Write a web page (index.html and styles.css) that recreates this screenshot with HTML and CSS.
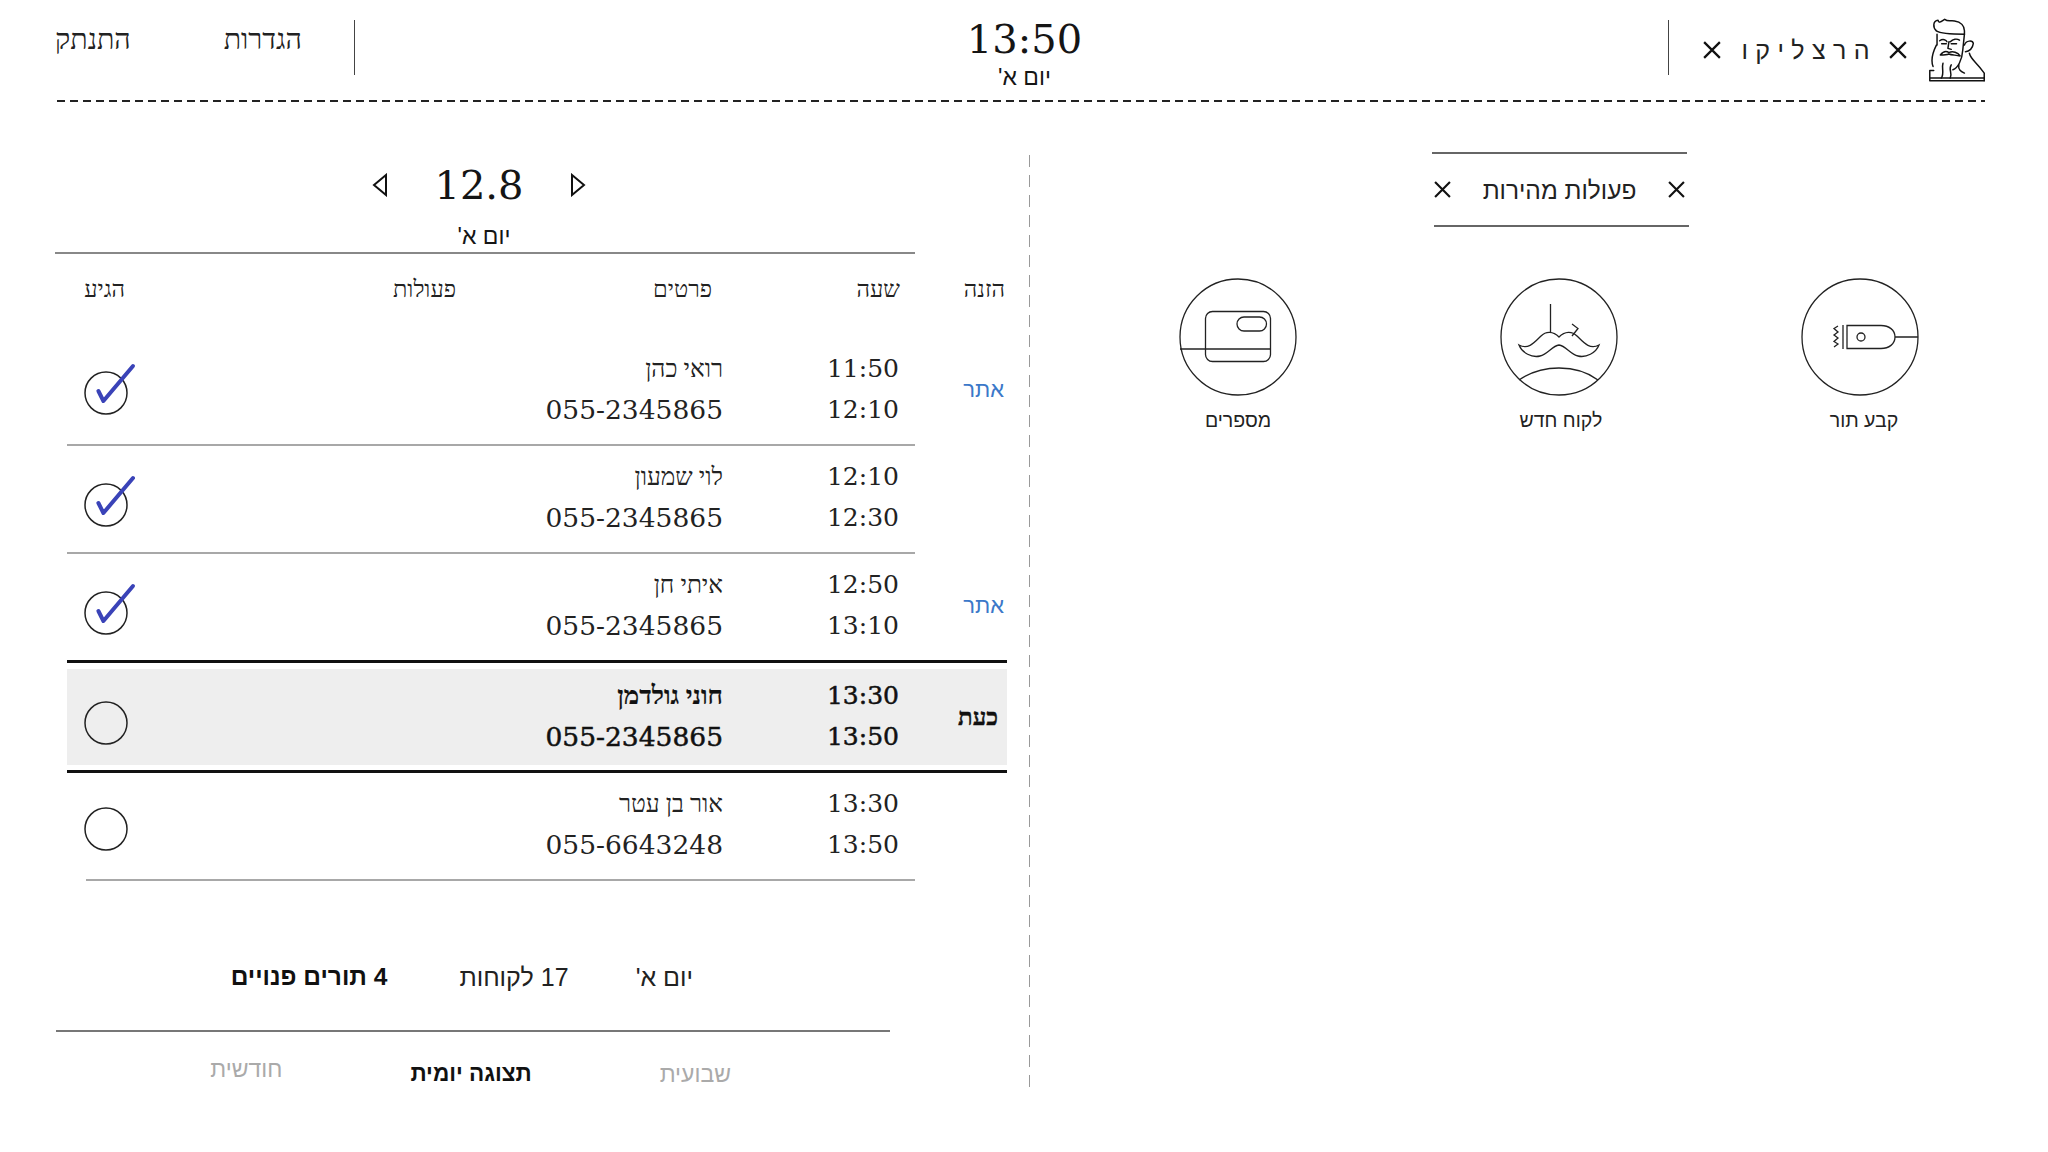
FILE: index.html
```html
<!DOCTYPE html>
<html lang="he" dir="rtl">
<head>
<meta charset="utf-8">
<title>הרצליקו</title>
<link rel="stylesheet" href="styles.css">
</head>
<body>
<header class="top">
  <div class="top-brand">
    <svg class="logo" viewBox="28 20 172 200" fill="none" stroke="#111" stroke-width="4.500" stroke-linecap="round" stroke-linejoin="round">
      <path d="M50 62C38 50 40 32 55 30C58 40 62 35 75 27C85 35 92 30 105 32C125 35 135 48 135 62L135 72C100 72 65 72 50 62"/>
      <path d="M52 72V105M60 92C70 85 80 90 82 95M92 95C100 87 112 85 120 90M66 101H80M95 101H111M88 95L85 115L95 118"/>
      <path d="M62 135C70 125 80 122 88 128C100 122 115 128 122 138C105 135 95 135 88 132C80 135 72 135 62 135Z"/>
      <path d="M50 105C40 125 32 150 40 170M135 72L130 120C128 150 115 175 100 180"/>
      <path d="M135 105C140 90 160 90 162 100C160 115 150 125 138 125M150 130C155 150 170 155 195 190V213"/>
      <path d="M30 213H195M30 205H195M30 213V182H42"/>
      <path d="M70 160C65 175 75 190 65 205M95 165C85 180 100 190 92 205M118 165C115 180 125 185 135 190"/>
    </svg>
    <svg class="x" viewBox="0 0 16 16"><path d="M1 1L15 15M15 1L1 15"/></svg>
    <span class="brand-name">הרצליקו</span>
    <svg class="x" viewBox="0 0 16 16"><path d="M1 1L15 15M15 1L1 15"/></svg>
    <span class="vline vline-brand"></span>
  </div>
  <div class="top-clock">
    <div class="clock-time">13:50</div>
    <div class="clock-day">יום א'</div>
  </div>
  <nav class="top-nav">
    <span class="vline"></span>
    <a class="nav-link nav-settings">הגדרות</a>
    <a class="nav-link">התנתק</a>
  </nav>
</header>
<div class="dash-h"></div>

<main class="main">
  <section class="quick">
    <div class="quick-title">
      <hr class="quick-rule quick-rule-top">
      <div class="quick-head">
        <svg class="x x-small" viewBox="0 0 16 16"><path d="M1 1L15 15M15 1L1 15"/></svg>
        <span class="quick-name">פעולות מהירות</span>
        <svg class="x x-small" viewBox="0 0 16 16"><path d="M1 1L15 15M15 1L1 15"/></svg>
      </div>
      <hr class="quick-rule">
    </div>
    <div class="quick-icons">
      <div class="action">
        <svg class="action-icon" viewBox="0 0 118 118" fill="none" stroke="#222" stroke-width="1.300">
          <circle cx="59" cy="59" r="58"/>
          <path d="M46 47.500H80C88 47.500 94 52 94 59C94 66 88 70.500 80 70.500H46ZM94 59H117"/>
          <circle cx="60" cy="59" r="4"/>
          <path d="M42 47V71M37 48L33 50.500L37 54L33 57L37 60L33 63.500L37 66L33 69"/>
        </svg>
        <span class="action-label action-label-first">קבע תור</span>
      </div>
      <div class="action action-mid">
        <svg class="action-icon" viewBox="0 0 118 118" fill="none" stroke="#222" stroke-width="1.300">
          <circle cx="59" cy="59" r="58"/>
          <path d="M50.500 26V55"/>
          <path d="M72 46L78 50.500L72 58"/>
          <path d="M19 67C28 72 34 65 41 58C46 53 53 53 59 59C65 53 72 53 77 58C84 65 90 72 99 67C96 75 86 80 78 78C70 76 66 68 59 67C52 68 48 76 40 78C32 80 22 75 19 67Z"/>
          <path d="M19 102C32 93 45 90 59 90C73 90 86 93 98 102"/>
        </svg>
        <span class="action-label action-label-mid">לקוח חדש</span>
      </div>
      <div class="action">
        <svg class="action-icon" viewBox="0 0 118 118" fill="none" stroke="#222" stroke-width="1.300">
          <circle cx="59" cy="59" r="58"/>
          <rect x="26.500" y="33.500" width="65" height="50" rx="7"/>
          <rect x="58" y="39" width="29.500" height="14" rx="7"/>
          <path d="M1 71H91.500"/>
        </svg>
        <span class="action-label">מספרים</span>
      </div>
    </div>
  </section>

  <section class="agenda">
    <div class="date-box">
      <div class="date-nav">
        <svg class="arrow" viewBox="0 0 16 24"><path d="M14 12L2 2V22Z"/></svg>
        <span class="date-num">12.8</span>
        <svg class="arrow" viewBox="0 0 16 24"><path d="M2 12L14 2V22Z"/></svg>
      </div>
      <div class="date-day">יום א'</div>
    </div>

    <div class="table">
      <div class="thead">
        <span>הזנה</span><span>שעה</span><span>פרטים</span><span>פעולות</span><span>הגיע</span>
      </div>

      <div class="row">
        <span class="entry">אתר</span>
        <div class="cell-time"><div>11:50</div><div>12:10</div></div>
        <div class="cell-info"><div class="name">רואי כהן</div><div>055-2345865</div></div>
        <svg class="tick tick-first" viewBox="0 0 44 44"><circle cx="22" cy="22" r="21"/><path class="tick-mark" d="M14.400 20L19.400 30L49 -5"/></svg>
      </div>
      <hr class="rule">

      <div class="row">
        <span class="entry"></span>
        <div class="cell-time"><div>12:10</div><div>12:30</div></div>
        <div class="cell-info"><div class="name">לוי שמעון</div><div>055-2345865</div></div>
        <svg class="tick" viewBox="0 0 44 44"><circle cx="22" cy="22" r="21"/><path class="tick-mark" d="M14.400 20L19.400 30L49 -5"/></svg>
      </div>
      <hr class="rule">

      <div class="row">
        <span class="entry">אתר</span>
        <div class="cell-time"><div>12:50</div><div>13:10</div></div>
        <div class="cell-info"><div class="name">איתי חן</div><div>055-2345865</div></div>
        <svg class="tick" viewBox="0 0 44 44"><circle cx="22" cy="22" r="21"/><path class="tick-mark" d="M14.400 20L19.400 30L49 -5"/></svg>
      </div>
      <hr class="rule-strong">

      <div class="row row-now">
        <span class="entry">כעת</span>
        <div class="cell-time"><div>13:30</div><div>13:50</div></div>
        <div class="cell-info"><div class="name">חוני גולדמן</div><div>055-2345865</div></div>
        <svg class="tick" viewBox="0 0 44 44"><circle cx="22" cy="22" r="21"/></svg>
      </div>
      <hr class="rule-strong rule-after-now">

      <div class="row">
        <span class="entry"></span>
        <div class="cell-time"><div>13:30</div><div>13:50</div></div>
        <div class="cell-info"><div class="name">אור בן עטר</div><div>055-6643248</div></div>
        <svg class="tick tick-last" viewBox="0 0 44 44"><circle cx="22" cy="22" r="21"/></svg>
      </div>
      <hr class="rule rule-last">
    </div>

    <div class="summary">
      <span>יום א'</span>
      <span>17 לקוחות</span>
      <span class="summary-free"><b>4 תורים פנויים</b></span>
    </div>
    <hr class="summary-rule">
    <div class="tabs">
      <span class="tab">שבועית</span>
      <span class="tab tab-active">תצוגה יומית</span>
      <span class="tab tab-month">חודשית</span>
    </div>
  </section>
</main>
</body>
</html>
```

FILE: styles.css
```css
* { box-sizing: border-box; }
html, body { margin: 0; padding: 0; }
body {
  width: 2048px;
  height: 1152px;
  overflow: hidden;
  background: #fff;
  color: #151515;
  font-family: "Liberation Sans", "DejaVu Sans", sans-serif;
}
hr { border: 0; margin: 0; }

/* top bar */
.top {
  display: grid;
  grid-template-columns: 1fr auto 1fr;
  height: 100px;
  margin: 0 62px 0 63px;
}
.top-brand, .top-nav { display: flex; align-items: flex-start; }
.top-nav { justify-content: flex-end; padding-top: 20px; margin-left: -8px; }
.top-brand { padding-top: 17px; }
.logo { width: 57px; height: 66px; }
.x { width: 18px; height: 18px; fill: none; stroke: #111; stroke-width: 2; flex: none; }
.top-brand .x { margin-top: 24px; }
.top-brand .x:nth-of-type(2) { margin-right: 22px; }
.brand-name {
  margin: 18px 12px 0 20px;
  font-size: 25px;
  line-height: 30px;
  letter-spacing: 7.400px;
  color: #222;
}
.vline { display: block; width: 1px; height: 55px; background: #444; flex: none; }
.vline-brand { margin: 3px 34px 0 0; }
.top-clock { text-align: center; padding: 18px 0 0 0; }
.clock-time {
  font-family: "DejaVu Serif", serif;
  font-size: 40px;
  line-height: 42px;
}
.clock-day { font-size: 23px; line-height: 28px; margin-top: 3px; }
.nav-link {
  font-family: "Liberation Serif", serif;
  font-size: 28.500px;
  line-height: 30px;
  margin: 5px 0 0 0;
  color: #222;
}
.top-nav .vline + .nav-link { margin-right: 52px; }
.top-nav .nav-link + .nav-link { margin-right: 93px; }

.dash-h {
  height: 2px;
  margin: 0 63px 0 57px;
  background: repeating-linear-gradient(to right, #222 0 8px, transparent 8px 13px);
}

/* layout */
.main { display: flex; margin-top: 53px; height: 933px; }
.quick { flex: 1; margin-top: -3px; }
.agenda {
  flex: none;
  width: 1030px;
  background: repeating-linear-gradient(to bottom, #999 0 12px, transparent 12px 20px) right top / 1px 100% no-repeat;
}

/* quick actions */
.quick-title { width: 255px; margin-right: 359px; }
.quick-rule { height: 2px; background: #666; }
.quick-rule-top { margin: 0 2px 0 -2px; }
.quick-head {
  display: flex;
  align-items: center;
  justify-content: space-between;
  height: 71px;
  padding: 0 4px 0 0;
  font-size: 24.500px;
  color: #222;
}
.quick-name { margin: 2px 0 0 0; }
.x-small { width: 17px; height: 17px; }
.quick-icons { display: flex; gap: 183px; margin: 51px 129px 0 0; }
.action { display: flex; flex-direction: column; align-items: center; width: 118px; }
.action-mid { margin-left: 20px; }
.action-icon { width: 118px; height: 118px; display: block; }
.action-label { margin-top: 12px; font-size: 19.500px; line-height: 24px; color: #222; white-space: nowrap; }
.action-label-first { transform: translateX(4px); }
.action-label-mid { transform: translateX(2px); }

/* date */
.date-box { margin: 0 115px 0 55px; height: 99px; border-bottom: 2px solid #888; }
.date-nav { display: flex; justify-content: center; align-items: center; gap: 46px; padding: 9px 12px 0 0; height: 51px; }
.arrow { width: 16px; height: 24px; fill: none; stroke: #111; stroke-width: 2; stroke-linejoin: miter; }
.date-num { font-family: "DejaVu Serif", serif; font-size: 40px; line-height: 42px; }
.date-day { text-align: center; font-size: 23px; line-height: 28px; margin-top: 16px; padding-right: 2px; }

/* table */
.table { width: 940px; margin-right: 23px; }
.thead {
  display: grid;
  grid-template-columns: 105px 188px 256px 331px 1fr;
  padding: 21px 2px 0 0;
  height: 84px;
  font-family: "Liberation Serif", serif;
  font-size: 23.500px;
  line-height: 28px;
  color: #222;
}
.row {
  display: grid;
  grid-template-columns: 108px 176px 1fr 60px;
  align-items: start;
  height: 106px;
  padding-top: 10px;
  font-family: "DejaVu Serif", serif;
  font-size: 25px;
  line-height: 41px;
  color: #222;
}
.entry {
  align-self: center;
  font-family: "Liberation Sans", sans-serif;
  font-size: 22px;
  line-height: 30px;
  padding: 0 3px 12px 0;
  color: #3b78c9;
}
.cell-time div, .cell-info div { height: 41px; }
.cell-info { font-size: 26.500px; }
.cell-info .name { font-family: "Liberation Serif", serif; font-size: 24.500px; }
.tick {
  justify-self: end;
  align-self: center;
  width: 44px;
  height: 44px;
  margin: 1px 0 0 17px;
  overflow: visible;
  fill: none;
  stroke: #222;
  stroke-width: 1.500;
}
.tick-first { margin-top: -6px; }
.tick-last { margin-top: -5px; }
.tick-mark { stroke: #3a43b8; stroke-width: 4; stroke-linecap: round; stroke-linejoin: round; }
.rule { height: 2px; background: #a8a8a8; margin-left: 0; margin-right: 92px; }
.rule-last { margin-left: 19px; }
.rule-strong { height: 3px; background: #111; }
.row-now {
  height: 96px;
  margin-top: 6px;
  padding-top: 6px;
  background: #eee;
  color: #111;
  -webkit-text-stroke: 0.500px #111;
}
.row-now .cell-info .name { font-weight: 700; font-size: 26px; -webkit-text-stroke: 0.200px #111; }
.row-now .entry {
  color: #111;
  font-weight: 700;
  font-family: "Liberation Serif", serif;
  font-size: 24px;
  padding-right: 9px;
  padding-bottom: 6px;
  -webkit-text-stroke: 0.400px #111;
}
.row-now .tick { margin-top: 6px; }
.rule-after-now { margin-top: 5px; }

/* summary + tabs */
.summary {
  display: flex;
  gap: 67px;
  margin: 82px 337px 0 0;
  font-size: 25px;
  line-height: 28px;
  color: #222;
}
.summary-free { margin-right: 5px; font-size: 24.500px; }
.summary b { color: #111; }
.summary-rule { height: 2px; background: #777; margin: 39px 140px 0 56px; }
.tabs { display: flex; gap: 128px; margin: 28px 299px 0 0; font-size: 23px; line-height: 28px; }
.tab { color: #aaa; }
.tab-active { color: #111; font-weight: 700; font-size: 22.500px; }
.tab-month { margin-top: -5px; }
```
